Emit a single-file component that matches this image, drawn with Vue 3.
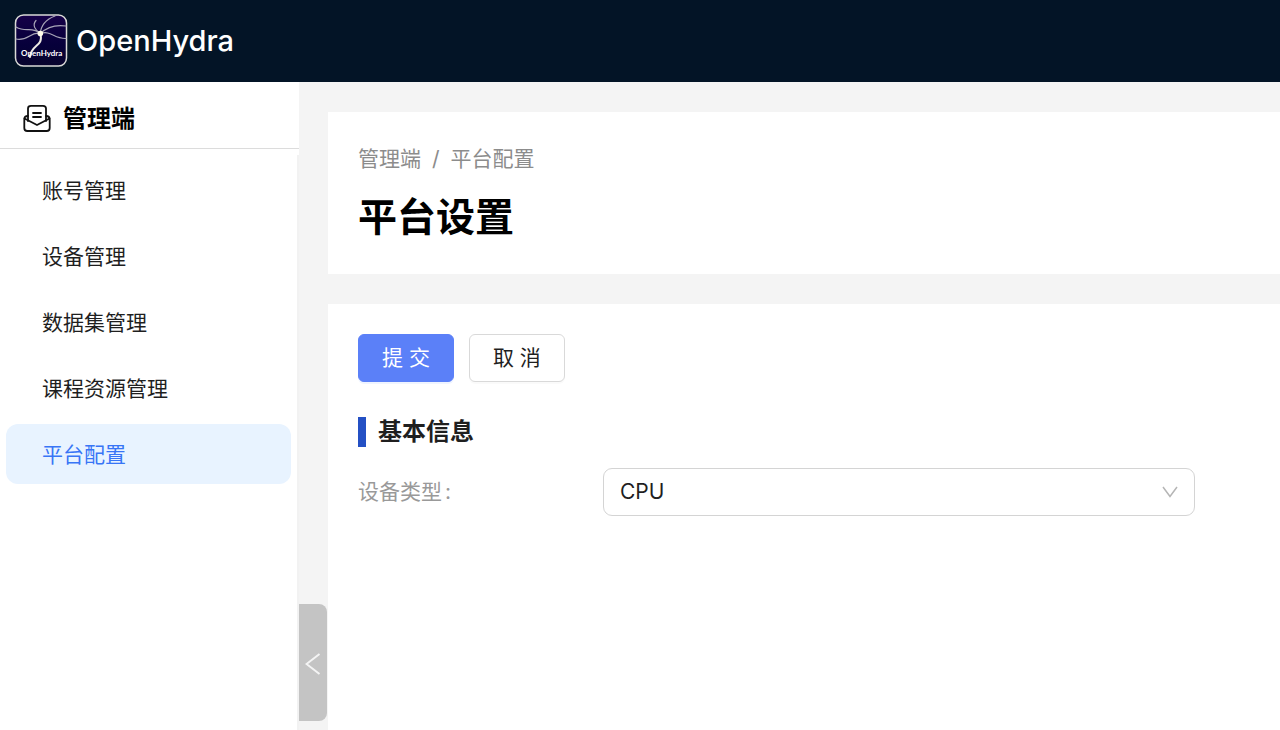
<script setup>
import { ref } from 'vue'

const menu = [
  { key: 'account', label: '账号管理' },
  { key: 'device', label: '设备管理' },
  { key: 'dataset', label: '数据集管理' },
  { key: 'course', label: '课程资源管理' },
  { key: 'platform', label: '平台配置' },
]
const active = ref('platform')
const deviceType = ref('CPU')
</script>

<template>
  <div class="app">
    <header class="topbar">
      <svg class="logo" viewBox="0 0 54 54" aria-hidden="true">
        <defs>
          <linearGradient id="logo-bg" x1="0" y1="0" x2="0" y2="1">
            <stop offset="0" stop-color="#160048" />
            <stop offset="0.6" stop-color="#06003a" />
            <stop offset="1" stop-color="#08042c" />
          </linearGradient>
        </defs>
        <rect x="1.500" y="1" width="51" height="51" rx="8" fill="url(#logo-bg)" stroke="#d9d9d6" stroke-width="1.5" />
        <g fill="none" stroke="#a9a5b8" stroke-width="1.200" stroke-linecap="round">
          <path d="M26.300 19.500C21 16 18 11 22 6.500" />
          <path d="M26.300 19.500C27 11 33 5 41 2" />
          <path d="M26.300 19.500C32 14 39 10 52 12" />
          <path d="M26.300 19.500C37 16 40 25 52 24.500" />
          <path d="M26.300 19.500C18 12 12 19 2 13" />
          <path d="M26.300 19.500C17 17 13 28 2 25" />
        </g>
        <path d="M26.300 19.500C30 33 17 30 16 43" fill="none" stroke="#eeeae2" stroke-width="2" stroke-linecap="round" />
        <circle cx="26.300" cy="19.500" r="2.800" fill="#fffbe9" />
        <text x="7" y="42" class="logo-text">OpenHydra</text>
      </svg>
      <span class="brand">OpenHydra</span>
    </header>

    <div class="body">
      <aside class="sidebar">
        <div class="side-title">
          <svg class="mail" viewBox="0 0 28 28" aria-hidden="true">
            <g fill="none" stroke="#111" stroke-width="1.8" stroke-linecap="round" stroke-linejoin="round">
              <path d="M5 16V3.500Q5 0.900 8 0.900H20Q23 0.900 23 3.500V16" />
              <path d="M5 11Q1.300 11 1.300 14.500V23Q1.300 26 4.300 26H23.700Q26.700 26 26.700 23V14.500Q26.700 11 23 11" />
              <path d="M1.500 13.500L14 20L26.500 13.500" />
              <path d="M10 8H18M10 12H18" />
            </g>
          </svg>
          <span>管理端</span>
        </div>
        <nav class="menu" aria-label="管理端">
          <a
            v-for="item in menu"
            :key="item.key"
            :href="'#' + item.key"
            class="menu-item"
            :class="{ active: item.key === active }"
            @click.prevent="active = item.key"
          >{{ item.label }}</a>
        </nav>
        <button class="collapse" type="button" aria-label="收起菜单">
          <svg viewBox="0 0 16 24" aria-hidden="true">
            <path d="M14.500 3L1.500 13L14.500 23" fill="none" stroke="#f4f4f4" stroke-width="2" />
          </svg>
        </button>
      </aside>

      <main class="content">
        <section class="card page-head">
          <nav class="crumbs" aria-label="面包屑">
            <a href="#admin">管理端</a>
            <span class="sep">/</span>
            <a href="#platform">平台配置</a>
          </nav>
          <h1>平台设置</h1>
        </section>

        <form class="card settings" @submit.prevent>
          <div class="actions">
            <button type="submit" class="btn primary">提 交</button>
            <button type="button" class="btn">取 消</button>
          </div>
          <h2>基本信息</h2>
          <div class="field">
            <label for="device-type">设备类型<span class="colon">:</span></label>
            <div class="select-wrap">
              <select id="device-type" v-model="deviceType">
                <option>CPU</option>
              </select>
              <svg class="arrow" viewBox="0 0 16 12" aria-hidden="true">
                <path d="M1 1L8 10.500L15 1" fill="none" stroke="#b5b5b5" stroke-width="1.5" />
              </svg>
            </div>
          </div>
        </form>
      </main>
    </div>
  </div>
</template>

<style>
body {
  margin: 0;
  background: #f4f4f4;
}
</style>

<style scoped>
* {
  box-sizing: border-box;
}
.app {
  display: flex;
  flex-direction: column;
  min-height: 100vh;
  font-family: Inter, "Noto Sans CJK SC", sans-serif;
  font-size: 21px;
  line-height: 32px;
  color: #1f1f1f;
}
.topbar {
  display: flex;
  align-items: center;
  gap: 8px;
  height: 82px;
  padding: 0 14px;
  background: #031426;
}
.logo {
  width: 54px;
  height: 54px;
}
.logo-text {
  font-family: Lato, sans-serif;
  font-size: 8px;
  font-weight: 700;
  fill: #fff;
}
.brand {
  font-size: 29px;
  line-height: 40px;
  font-weight: 500;
  color: #fff;
}
.body {
  display: flex;
  flex: 1;
}
.sidebar {
  position: relative;
  display: flex;
  flex-direction: column;
  flex: 0 0 299px;
  background: #fff;
}
.side-title {
  display: flex;
  align-items: center;
  gap: 12px;
  height: 67px;
  padding: 8px 23px 0;
  border-bottom: 1px solid #dcdcdc;
  font-size: 24px;
  font-weight: 700;
  color: #000;
}
.mail {
  width: 28px;
  height: 28px;
}
.menu {
  display: flex;
  flex-direction: column;
  flex: 1;
  gap: 6px;
  margin-top: 6px;
  padding: 5px 6px;
  border-right: 2px solid #f2f2f2;
}
.menu-item {
  height: 60px;
  padding: 1px 36px 0;
  line-height: 60px;
  border-radius: 12px;
  color: #1f1f1f;
  text-decoration: none;
}
.menu-item.active {
  background: #e8f3ff;
  color: #3875f6;
}
.collapse {
  position: absolute;
  left: 100%;
  bottom: 9px;
  display: flex;
  align-items: center;
  justify-content: center;
  width: 28px;
  height: 117px;
  padding: 0;
  border: 0;
  border-radius: 0 8px 8px 0;
  background: #c4c4c4;
}
.collapse svg {
  width: 16px;
  height: 24px;
}
.content {
  display: flex;
  flex: 1;
  flex-direction: column;
  gap: 30px;
  min-width: 0;
  padding: 30px 0 0 29px;
}
.card {
  padding: 30px;
  background: #fff;
}
.crumbs {
  display: flex;
  gap: 11px;
  padding-top: 1px;
  color: #8c8c8c;
}
.crumbs a {
  color: inherit;
  text-decoration: none;
}
h1 {
  margin: 15px 0 0;
  font-size: 39px;
  line-height: 54px;
  font-weight: 700;
  color: #000;
}
.settings {
  flex: 1;
}
.actions {
  display: flex;
  gap: 15px;
}
.btn {
  height: 48px;
  padding: 0 23px;
  border: 1px solid #d9d9d9;
  border-radius: 6px;
  background: #fff;
  box-shadow: 0 2px 0 rgba(0, 0, 0, 0.02);
  font: inherit;
  color: #1f1f1f;
}
.btn.primary {
  border-color: #5b80f8;
  background: #5b80f8;
  box-shadow: 0 2px 0 #eff4ff;
  color: #fff;
}
h2 {
  margin: 35px 0 0;
  padding-left: 12px;
  border-left: 8px solid #2450c4;
  font-size: 24px;
  line-height: 30px;
  font-weight: 700;
}
.field {
  display: grid;
  grid-template-columns: 245px minmax(0, 1fr);
  align-items: center;
  margin-top: 21px;
  padding-right: 55px;
}
.field label {
  color: #999;
}
.colon {
  margin-left: 3px;
}
.select-wrap {
  position: relative;
}
select {
  display: block;
  width: 100%;
  height: 48px;
  padding: 0 16px;
  appearance: none;
  border: 1px solid #d4d4d4;
  border-radius: 9px;
  background: #fff;
  font: inherit;
  color: #1f1f1f;
}
.arrow {
  position: absolute;
  top: 18px;
  right: 17px;
  width: 16px;
  height: 12px;
  pointer-events: none;
}
</style>
